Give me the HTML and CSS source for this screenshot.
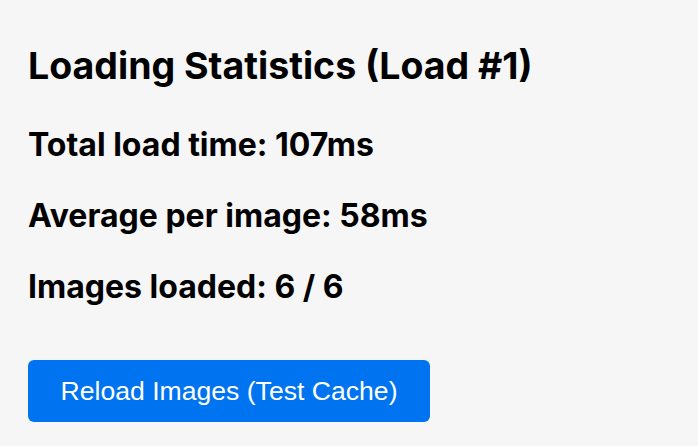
FILE: index.html
```html
<!DOCTYPE html>
<html lang="en">
<head>
  <meta charset="UTF-8" />
  <meta name="viewport" content="width=device-width, initial-scale=1" />
  <title>Loading Statistics</title>
  <link rel="stylesheet" href="styles.css">
</head>
<body>
  <main class="stats" aria-label="Image loading statistics">
    <h2>Loading Statistics (Load #1)</h2>
    <p class="stat">Total load time: 107ms</p>
    <p class="stat">Average per image: 58ms</p>
    <p class="stat">Images loaded: 6 / 6</p>
    <button id="reloadBtn" class="reload-btn">Reload Images (Test Cache)</button>
  </main>
</body>
</html>
```

FILE: styles.css
```css
*, *::before, *::after {
  box-sizing: border-box;
}

body {
  margin: 0;
  background: #f6f6f6;
  font-family: 'Inter', sans-serif;
  color: #000;
}

.stats {
  padding: 43px 28px 0;
}

h2 {
  margin: 0 0 37px 0;
  font-size: 37.5px;
  font-weight: 700;
  line-height: normal;
}

.stat {
  margin: 32px 0;
  font-size: 32px;
  font-weight: 700;
  line-height: normal;
}

.reload-btn {
  display: block;
  margin-top: 54px;
  width: 402px;
  height: 62px;
  background-color: #0074f0;
  border: none;
  border-radius: 6px;
  color: #fff;
  font-family: 'Liberation Sans', Arial, sans-serif;
  font-size: 26.6px;
  cursor: pointer;
}
```
